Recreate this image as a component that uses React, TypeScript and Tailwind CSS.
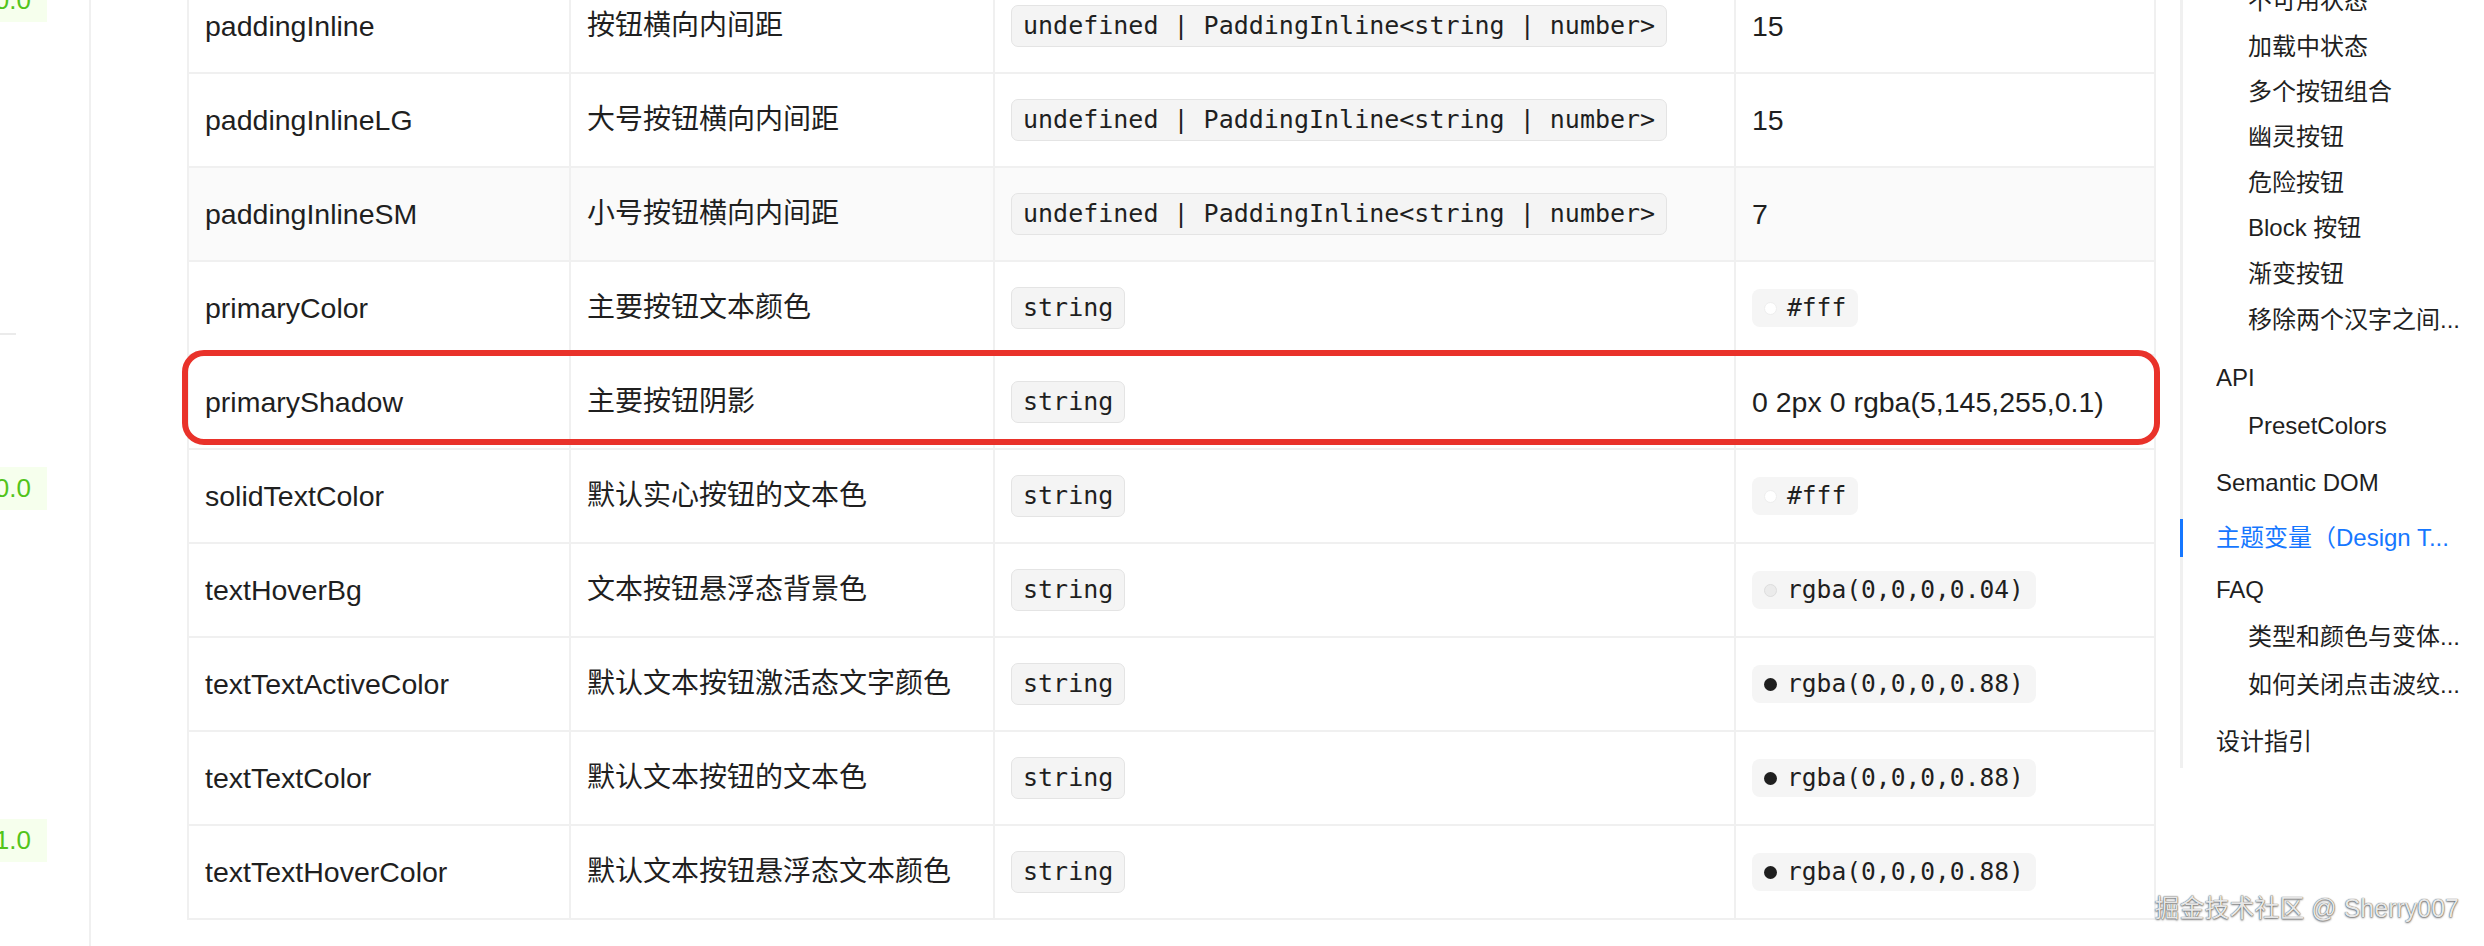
import React from 'react';

type Swatch = 'white' | 'faint' | 'dark';

type TokenRow = {
  name: string;
  desc: string;
  type: string;
  value: string;
  swatch?: Swatch;
};

const paddingType = 'undefined | PaddingInline<string | number>';

const rows: TokenRow[] = [
  { name: 'paddingInline', desc: '按钮横向内间距', type: paddingType, value: '15' },
  { name: 'paddingInlineLG', desc: '大号按钮横向内间距', type: paddingType, value: '15' },
  { name: 'paddingInlineSM', desc: '小号按钮横向内间距', type: paddingType, value: '7' },
  { name: 'primaryColor', desc: '主要按钮文本颜色', type: 'string', value: '#fff', swatch: 'white' },
  { name: 'primaryShadow', desc: '主要按钮阴影', type: 'string', value: '0 2px 0 rgba(5,145,255,0.1)' },
  { name: 'solidTextColor', desc: '默认实心按钮的文本色', type: 'string', value: '#fff', swatch: 'white' },
  { name: 'textHoverBg', desc: '文本按钮悬浮态背景色', type: 'string', value: 'rgba(0,0,0,0.04)', swatch: 'faint' },
  { name: 'textTextActiveColor', desc: '默认文本按钮激活态文字颜色', type: 'string', value: 'rgba(0,0,0,0.88)', swatch: 'dark' },
  { name: 'textTextColor', desc: '默认文本按钮的文本色', type: 'string', value: 'rgba(0,0,0,0.88)', swatch: 'dark' },
  { name: 'textTextHoverColor', desc: '默认文本按钮悬浮态文本颜色', type: 'string', value: 'rgba(0,0,0,0.88)', swatch: 'dark' },
];

const swatchClass: Record<Swatch, string> = {
  white: 'bg-white border border-[#eeeeee]',
  faint: 'bg-[#ebebeb] border border-[#dddddd]',
  dark: 'bg-[#1f1f1f]',
};

// anchor links; h = distance to the next link's text line
const anchorLinks = [
  { label: '不可用状态', level: 2, h: 'h-[45.6px]' },
  { label: '加载中状态', level: 2, h: 'h-[45px]' },
  { label: '多个按钮组合', level: 2, h: 'h-[45px]' },
  { label: '幽灵按钮', level: 2, h: 'h-[46px]' },
  { label: '危险按钮', level: 2, h: 'h-[45px]' },
  { label: 'Block 按钮', level: 2, h: 'h-[46px]' },
  { label: '渐变按钮', level: 2, h: 'h-[46px]' },
  { label: '移除两个汉字之间...', level: 2, h: 'h-[58px]' },
  { label: 'API', level: 1, h: 'h-[48px]' },
  { label: 'PresetColors', level: 2, h: 'h-[57px]' },
  { label: 'Semantic DOM', level: 1, h: 'h-[55px]' },
  { label: '主题变量（Design T...', level: 1, h: 'h-[52px]', active: true },
  { label: 'FAQ', level: 1, h: 'h-[47px]' },
  { label: '类型和颜色与变体...', level: 2, h: 'h-[48px]' },
  { label: '如何关闭点击波纹...', level: 2, h: 'h-[57px]' },
  { label: '设计指引', level: 1, h: 'h-[45px]' },
];

const mono = "font-['DejaVu_Sans_Mono','Noto_Sans_CJK_SC',monospace]";

const VersionBadge = ({ text }: { text: string }) => (
  <div className="h-[43px] w-[47px] bg-[#f6ffed] flex items-center justify-end pr-[16px] text-[26px] text-[#52c41a] overflow-hidden whitespace-nowrap">
    {text}
  </div>
);

const LeftRail = () => (
  <div className="w-[91px] self-stretch shrink-0 border-r-2 border-[#f0f0f0] flex flex-col">
    <div className="-mt-[21px]">
      <VersionBadge text="0.0" />
    </div>
    <div className="mt-[311px] h-[2px] w-[16px] bg-[#ebebeb]" />
    <div className="mt-[132px]">
      <VersionBadge text="0.0" />
    </div>
    <div className="mt-[309px]">
      <VersionBadge text="1.0" />
    </div>
  </div>
);

const CodeTag = ({ children }: { children: React.ReactNode }) => (
  <span
    className={`inline-flex items-center h-[42px] px-[11px] rounded-[7px] border border-[#e4e4e4] bg-[#f4f4f4] text-[25px] text-[#1f1f1f] whitespace-nowrap ${mono}`}
  >
    {children}
  </span>
);

const ColorTag = ({ swatch, label }: { swatch: Swatch; label: string }) => (
  <span
    className={`inline-flex items-center gap-[10px] h-[38px] pl-[12px] pr-[12px] rounded-[8px] bg-[#f5f5f5] text-[24.6px] text-[#1f1f1f] whitespace-nowrap ${mono}`}
  >
    <span className={`w-[13px] h-[13px] rounded-full shrink-0 ${swatchClass[swatch]}`} />
    {label}
  </span>
);

const cell = 'flex items-center pl-4 border-l-2 border-[#f0f0f0] whitespace-nowrap overflow-hidden';

const TokenTable = () => (
  <div className="ml-[96px] w-[1969px] shrink-0 -mt-[20px]">
    {rows.map((row, i) => (
      <div
        key={row.name}
        className={`relative grid grid-cols-[382px_424px_741px_422px] h-[94px] border-b-2 border-[#f0f0f0] ${i === 2 ? 'bg-[#fafafa]' : 'bg-white'}`}
      >
        <div className={`${cell} text-[28.5px]`}>{row.name}</div>
        <div className={`${cell} text-[28px]`}>{row.desc}</div>
        <div className={cell}>
          <CodeTag>{row.type}</CodeTag>
        </div>
        <div className={`${cell} border-r-2 text-[28.5px]`}>
          {row.swatch ? <ColorTag swatch={row.swatch} label={row.value} /> : row.value}
        </div>
        {i === 4 && (
          <div className="absolute -top-[6px] bottom-[3px] -left-[5px] -right-[4px] border-[6px] border-[#e9322a] rounded-[22px] pointer-events-none" />
        )}
      </div>
    ))}
  </div>
);

const AnchorNav = () => (
  <aside className="ml-[24px] flex-1 flex flex-col items-start">
    <div className="relative w-full border-l-[3px] border-[#f0f0f0] -mt-[18px] text-[24px] text-[#1f1f1f]">
      {anchorLinks.map((link) => (
        <div
          key={link.label}
          className={`relative ${link.h} ${link.level === 1 ? 'pl-[33px]' : 'pl-[65px]'} pr-[24px]`}
        >
          {link.active && <span className="absolute -left-[3px] top-0 w-[3px] h-[38px] bg-[#1677ff]" />}
          <div
            className={`h-[38px] leading-[38px] whitespace-nowrap overflow-hidden ${link.active ? 'text-[#1677ff]' : ''}`}
          >
            {link.label}
          </div>
        </div>
      ))}
    </div>
  </aside>
);

export default function App() {
  return (
    <div className="relative w-[2484px] h-[946px] overflow-hidden bg-white flex items-start text-[#1f1f1f] font-['Liberation_Sans','Noto_Sans_CJK_SC',sans-serif]">
      <LeftRail />
      <TokenTable />
      <AnchorNav />
      <div className="absolute right-[25px] top-[890px] text-[25px] text-[#e6e6e6] whitespace-nowrap [text-shadow:0_0_1px_#3a3a3a,0_1px_2px_rgba(0,0,0,0.55)]">
        掘金技术社区 @ Sherry007
      </div>
    </div>
  );
}
